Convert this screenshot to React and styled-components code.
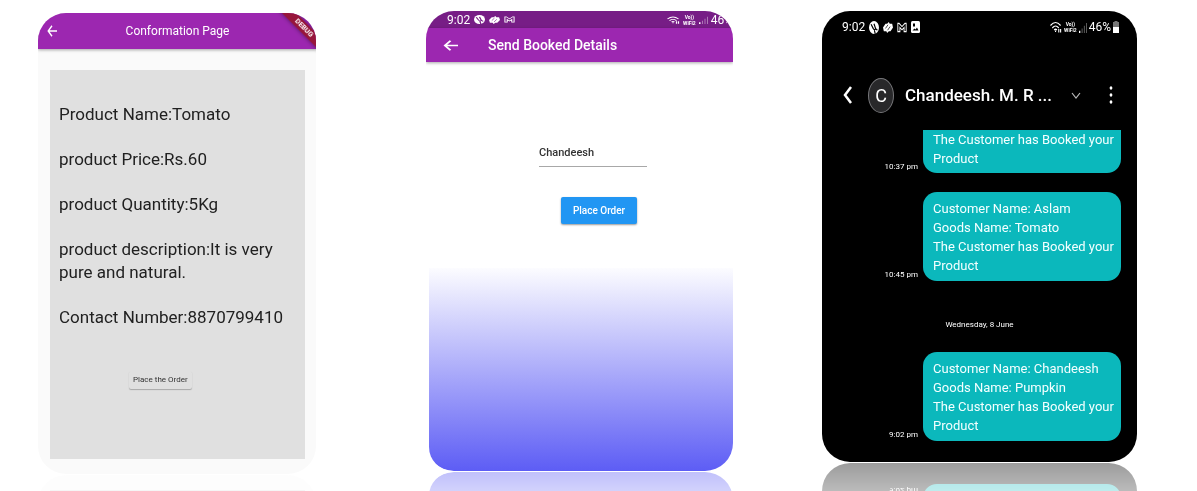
import React from 'react';
import styled, { createGlobalStyle, css } from 'styled-components';

const Global = createGlobalStyle`
  * { box-sizing: border-box; }
  body { margin: 0; background: #fff; font-family: Roboto, "Liberation Sans", sans-serif; }
  button, input { font: inherit; color: inherit; border: 0; padding: 0; background: none; }
  p, h1 { margin: 0; font-weight: 400; }
  svg { display: block; flex: none; }
`;

const Page = styled.main`
  display: flex;
  align-items: flex-start;
  min-height: 100vh;
  overflow: hidden;
  padding: 11px 60px 17px 38px;
`;

const Phone = styled.section`
  position: relative;
  flex: ${(p) => p.$grow} 1 0;
  min-width: 0;
  overflow: hidden;
  display: flex;
  flex-direction: column;
  border-radius: 28px;
  -webkit-box-reflect: below 1px linear-gradient(transparent 80%, rgba(0, 0, 0, 0.39));
`;

const ConfirmPhone = styled(Phone)`
  margin: 2px 110px 0 0;
  background: #fafafa;
  color: #212121;
  padding-bottom: 15px;
`;

const OrderPhone = styled(Phone)`
  margin-right: 89px;
  background: #fff;
`;

const ChatPhone = styled(Phone)`
  background: #000;
  color: #fff;
`;

const AppBar = styled.header`
  display: flex;
  align-items: center;
  background: #9c27b0;
  color: #fff;
  box-shadow: 0 1px 3px rgba(0, 0, 0, 0.35);

  h1 { font-weight: 500; }

  ${(p) =>
    p.$centered
      ? css`
          height: 36px;
          padding: 0 18px 0 9px;
          h1 { flex: 1; text-align: center; font-size: 12px; font-weight: 400; }
        `
      : css`
          height: 34px;
          padding: 0 17px;
          gap: 30px;
          h1 { font-size: 14px; }
        `}
`;

const IconButton = styled.button`
  display: grid;
  place-items: center;
  cursor: pointer;
`;

const Ribbon = styled.span`
  position: absolute;
  top: 10px;
  right: -24px;
  width: 72px;
  height: 10px;
  background: #97163b;
  box-shadow: 0 0 4px rgba(0, 0, 0, 0.5);
  color: #fff;
  font-size: 7px;
  font-weight: 700;
  line-height: 10px;
  text-align: center;
  transform: rotate(45deg);
`;

const Details = styled.div`
  display: flex;
  flex-direction: column;
  gap: 22px;
  min-height: 389px;
  margin: 21px 11px 0 12px;
  padding: 33px 9px 0;
  background: #e0e0e0;
  font-size: 17px;
  line-height: 23px;
`;

const PlaceButton = styled.button`
  cursor: pointer;
  border-radius: 2px;
  ${(p) =>
    p.$primary
      ? css`
          align-self: center;
          height: 27px;
          margin-left: 12px;
          padding: 0 12px;
          background: #2196f3;
          color: #fff;
          font-size: 10px;
          font-weight: 500;
          box-shadow: 0 1px 2px rgba(0, 0, 0, 0.4);
        `
      : css`
          align-self: flex-start;
          height: 18px;
          margin: 20px 0 0 70px;
          padding: 0 4px;
          background: #e0e0e0;
          color: #333;
          font-size: 8px;
          line-height: 18px;
          box-shadow: 0 1px 1px rgba(0, 0, 0, 0.25);
        `}
`;

const StatusBar = styled.div`
  display: flex;
  align-items: center;
  justify-content: space-between;
  color: #fff;
  font-size: 12px;
  ${(p) =>
    p.$compact
      ? css`height: 17px; padding: 0 0 0 21px; background: #771d86;`
      : css`height: 32px; padding: 0 18px 0 20px;`}
`;

const StatusGroup = styled.div`
  display: flex;
  align-items: center;
  gap: ${(p) => p.$gap || 4}px;
`;

const VoLabel = styled.span`
  display: flex;
  flex-direction: column;
  font-size: 5px;
  font-weight: 700;
  line-height: 6px;
  text-align: center;
`;

const OrderForm = styled.form`
  display: flex;
  flex-direction: column;
  align-items: center;
  min-height: 206px;
  margin-left: 3px;
  padding: 82px 0 0 24px;
`;

const NameInput = styled.input`
  width: 108px;
  height: 23px;
  margin-bottom: 30px;
  padding-bottom: 6px;
  border-bottom: 1px solid #a8a8a8;
  border-radius: 0;
  color: #333;
  font-size: 11px;
  font-weight: 500;
  outline: 0;
`;

const Fade = styled.div`
  height: 203px;
  margin-left: 3px;
  background: linear-gradient(#fcfcff, #5d5df5);
  border-bottom-left-radius: 24px;
`;

const ChatHeader = styled.header`
  display: flex;
  align-items: center;
  height: 54px;
  margin-top: 25px;
  padding: 0 24px 0 20px;

  h1 { flex: 1; margin-left: 11px; font-size: 17px; font-weight: 500; white-space: nowrap; }
`;

const HeaderActions = styled.div`
  display: flex;
  align-items: center;
  gap: 28px;
`;

const Avatar = styled.span`
  display: grid;
  place-items: center;
  width: 26px;
  height: 35px;
  margin-left: 15px;
  border: 1px solid #77777a;
  border-radius: 50%;
  background: #28282a;
  font-size: 18px;
`;

const Messages = styled.div`
  display: flex;
  flex-direction: column;
  margin-top: 8px;
  padding-bottom: 21px;
`;

const Message = styled.div`
  display: flex;
  align-items: flex-end;
  justify-content: flex-end;
  gap: 5px;
  margin-bottom: ${(p) => p.$after}px;
  padding-right: 16px;

  time { font-size: 8px; line-height: 12px; }
`;

const Bubble = styled.p`
  width: 198px;
  padding: ${(p) => (p.$cut ? '0 4px 5px 10px' : '7px 4px 6px 10px')};
  border-radius: ${(p) => (p.$cut ? '0 0 14px 14px' : '14px')};
  background: #0bb8bc;
  color: #f4ffff;
  font-size: 13px;
  line-height: 19px;
`;

const DateLabel = styled.p`
  margin-bottom: 21px;
  text-align: center;
  font-size: 8px;
  line-height: 12px;
`;

const ArrowLeft = ({ w, h }) => (
  <svg width={w} height={h} viewBox="0 0 16 16" preserveAspectRatio="none" fill="none" stroke="currentColor" strokeWidth="2.200">
    <path d="M16 8H2M8 1L2 8l6 7" />
  </svg>
);

const Torrent = ({ w = 10, h = 13, mark = '#000' }) => (
  <svg width={w} height={h} viewBox="0 0 12 14" preserveAspectRatio="none">
    <ellipse cx="6" cy="7" rx="6" ry="7" fill="#fff" />
    <path d="M2.500 3.500L5 8q1.500 2.500 3 .5L6 3M8.500 8.500L10 10M6.500 10l1 4" fill="none" stroke={mark} strokeWidth="1.400" />
  </svg>
);

const Hands = ({ w = 10, h = 11, mark = '#000' }) => (
  <svg width={w} height={h} viewBox="0 0 12 12" preserveAspectRatio="none">
    <path d="M0 6l3-4 2 0 2-2 1 2 3 0 1 4-3 4-2 0-2 2-1-2-3 0z" fill="#fff" />
    <path d="M3 7l3-4M5.500 9l3-4" stroke={mark} strokeWidth=".8" />
  </svg>
);

const Gmail = ({ w = 10, h = 11 }) => (
  <svg width={w} height={h} viewBox="0 0 12 12" preserveAspectRatio="none" fill="none" stroke="#fff" strokeWidth="1.100">
    <path d="M1 1.500h1.500L6 5l3.500-3.500H11v9H8.500V6L6 8.500 3.500 6v4.500H1z" />
  </svg>
);

const Picture = () => (
  <svg width="9" height="12" viewBox="0 0 9 12">
    <rect width="9" height="12" rx="1.500" fill="#fff" />
    <path d="M2 2.500h2v3H2zM1.500 9.500l2-2 1 1 1.500-2 1.500 3z" fill="#000" />
  </svg>
);

const Wifi = ({ w = 12, h = 12 }) => (
  <svg width={w} height={h} viewBox="0 0 13 12" preserveAspectRatio="none" fill="none" stroke="#fff" strokeWidth="1.200">
    <path d="M.5 4.500q5.500-6 11 0M2.500 7q3.500-4 7 0M4.500 9Q6 7.500 7.500 9" />
    <path d="M6 9.500v1.500M9.500 8v3.500M11.500 8v3.500" />
  </svg>
);

const Signal = ({ w = 8, h = 11 }) => (
  <svg width={w} height={h} viewBox="0 0 9 12" preserveAspectRatio="none">
    <path d="M0 9.500h1.500V12H0z" fill="#fff" />
    <path d="M3 7h1v5H3zM5.500 4h1v8h-1zM8 1h1v11H8z" fill="#fff" opacity=".4" />
  </svg>
);

const Battery = () => (
  <svg width="6" height="12" viewBox="0 0 6 12">
    <path d="M1.500 0h3v1H6v6H0V1h1.500z" fill="#777" />
    <path d="M0 6h6v6H0z" fill="#fff" />
  </svg>
);

export default function App() {
  return (
    <>
      <Global />
      <Page>
        <ConfirmPhone $grow={278}>
          <AppBar $centered>
            <IconButton aria-label="Back"><ArrowLeft w={10} h={12} /></IconButton>
            <h1>Conformation Page</h1>
          </AppBar>
          <Ribbon>DEBUG</Ribbon>
          <Details>
            <p>Product Name:Tomato</p>
            <p>product Price:Rs.60</p>
            <p>product Quantity:5Kg</p>
            <p>product description:It is very pure and natural.</p>
            <p>Contact Number:8870799410</p>
            <PlaceButton>Place the Order</PlaceButton>
          </Details>
        </ConfirmPhone>

        <OrderPhone $grow={307}>
          <StatusBar $compact>
            <StatusGroup>
              <span>9:02</span>
              <Torrent w={11} h={9} mark="#771d86" />
              <Hands w={11} h={8} mark="#771d86" />
              <Gmail w={11} h={7} />
            </StatusGroup>
            <StatusGroup $gap={3}>
              <Wifi w={13} h={8} />
              <VoLabel><span>Vo))</span><span>WiFi2</span></VoLabel>
              <Signal w={9} h={8} />
              <span>46%</span>
            </StatusGroup>
          </StatusBar>
          <AppBar>
            <IconButton aria-label="Back"><ArrowLeft w={15} h={11} /></IconButton>
            <h1>Send Booked Details</h1>
          </AppBar>
          <OrderForm onSubmit={(e) => e.preventDefault()}>
            <NameInput aria-label="Name" defaultValue="Chandeesh" />
            <PlaceButton $primary>Place Order</PlaceButton>
          </OrderForm>
          <Fade />
        </OrderPhone>

        <ChatPhone $grow={315}>
          <StatusBar>
            <StatusGroup>
              <span>9:02</span>
              <Torrent />
              <Hands />
              <Gmail />
              <Picture />
            </StatusGroup>
            <StatusGroup $gap={2}>
              <Wifi />
              <VoLabel><span>Vo))</span><span>WiFi2</span></VoLabel>
              <Signal />
              <span>46%</span>
              <Battery />
            </StatusGroup>
          </StatusBar>
          <ChatHeader>
            <IconButton aria-label="Back">
              <svg width="11" height="18" viewBox="0 0 11 18" fill="none" stroke="currentColor" strokeWidth="2.500"><path d="M9 1L3 9l6 8" /></svg>
            </IconButton>
            <Avatar>C</Avatar>
            <h1>Chandeesh. M. R ...</h1>
            <HeaderActions>
              <IconButton aria-label="Show contact">
                <svg width="10" height="7" viewBox="0 0 10 7" fill="none" stroke="#bbb" strokeWidth="1.200"><path d="M1 1l4 5 4-5" /></svg>
              </IconButton>
              <IconButton aria-label="More options">
                <svg width="4" height="18" viewBox="0 0 4 18" fill="#fff">
                  <ellipse cx="2" cy="2" rx="1.400" ry="1.800" />
                  <ellipse cx="2" cy="9" rx="1.400" ry="1.800" />
                  <ellipse cx="2" cy="16" rx="1.400" ry="1.800" />
                </svg>
              </IconButton>
            </HeaderActions>
          </ChatHeader>
          <Messages>
            <Message $after={19}>
              <time>10:37 pm</time>
              <Bubble $cut>The Customer has Booked your Product</Bubble>
            </Message>
            <Message $after={38}>
              <time>10:45 pm</time>
              <Bubble>Customer Name: Aslam<br />Goods Name: Tomato<br />The Customer has Booked your Product</Bubble>
            </Message>
            <DateLabel>Wednesday, 8 June</DateLabel>
            <Message $after={0}>
              <time>9:02 pm</time>
              <Bubble>Customer Name: Chandeesh<br />Goods Name: Pumpkin<br />The Customer has Booked your Product</Bubble>
            </Message>
          </Messages>
        </ChatPhone>
      </Page>
    </>
  );
}
